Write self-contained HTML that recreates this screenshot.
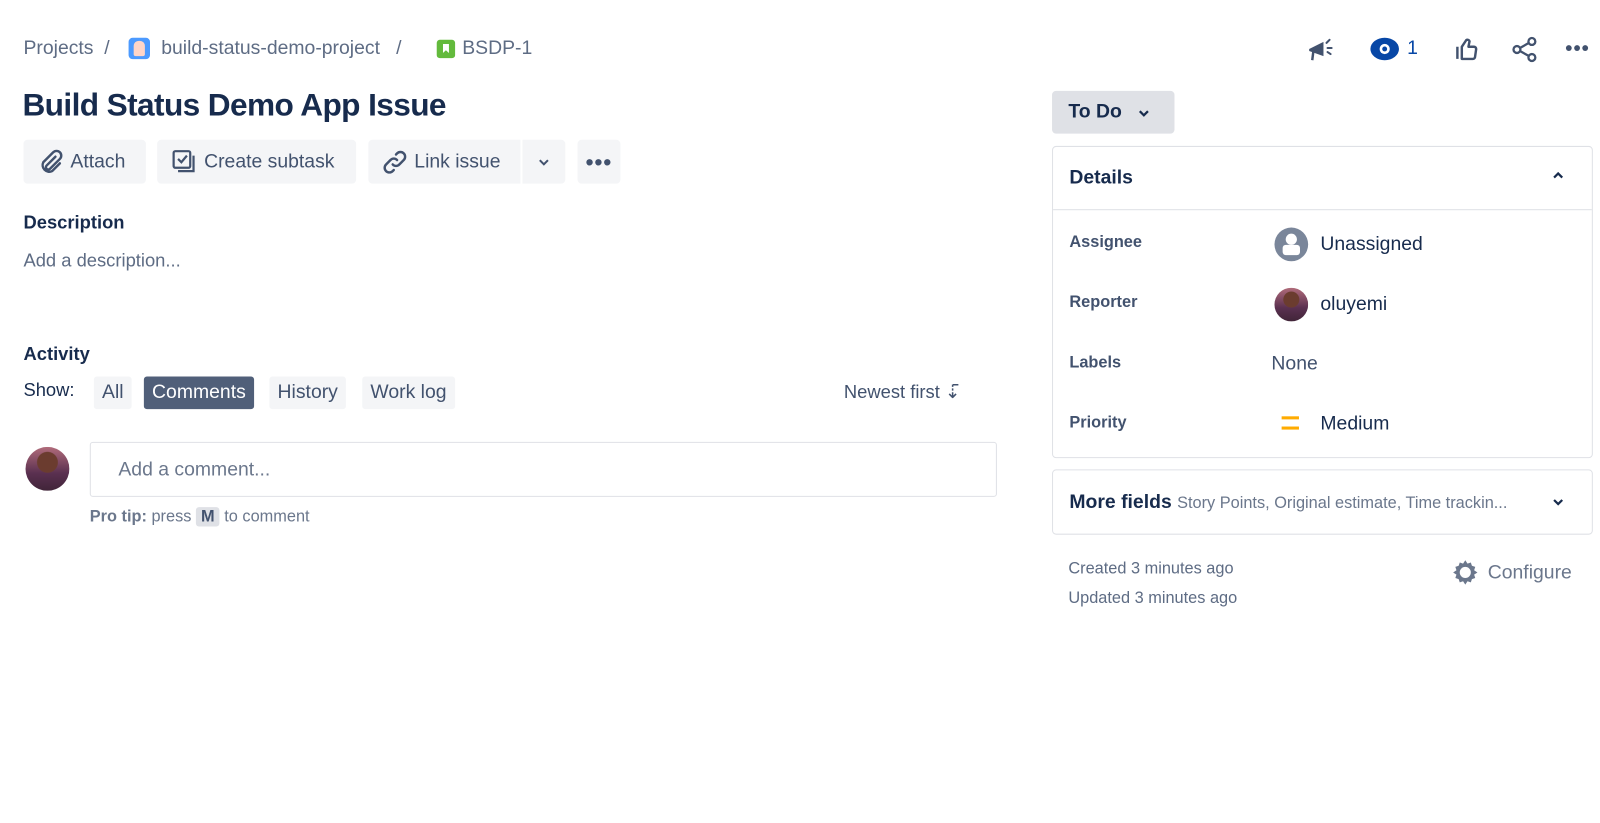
<!DOCTYPE html>
<html><head><meta charset="utf-8"><style>
*{box-sizing:border-box;margin:0;padding:0}
body{width:1600px;height:823px;background:#fff;font-family:"Liberation Sans",Arial,sans-serif;color:#172b4d;position:relative;overflow:hidden}
#w{position:absolute;left:0;top:0;width:1568px;height:807px;transform:scale(1.0204);transform-origin:0 0}
.a{position:absolute;white-space:nowrap}
.btn{position:absolute;background:#f4f5f7;border-radius:4px;height:43px;display:flex;align-items:center;font-size:19px;color:#42526e}
.pill{position:absolute;top:369px;height:32px;border-radius:3px;background:#f4f5f7;color:#42526e;font-size:19px;display:flex;align-items:center;padding:0 8px}
.lbl{position:absolute;left:1048px;font-size:16px;font-weight:bold;color:#42526e}
.val{position:absolute;font-size:19px;color:#172b4d}
.av{position:absolute;border-radius:50%;background:radial-gradient(circle at 50% 35%,#6b3c2f 0 28%,transparent 30%),linear-gradient(#b06b7a,#5a3050 60%,#402438);}
</style></head><body><div id="w">
<div class="a" style="left:23px;top:37px;font-size:19px;color:#5e6c84">Projects&nbsp;&nbsp;/</div>
<div class="a" style="left:126px;top:37px;width:21px;height:21px;background:#4c9aff;border-radius:4px"><div style="margin:3px 5px;width:11px;height:15px;background:#ffd5c8;border-radius:5px 5px 2px 2px"></div></div>
<div class="a" style="left:158px;top:37px;font-size:19px;color:#5e6c84">build-status-demo-project&nbsp;&nbsp;&nbsp;/</div>
<div class="a" style="left:428px;top:39px;width:18px;height:18px;background:#63ba3c;border-radius:3px"><div style="margin:4px 6px;width:6px;height:9px;background:#fff;clip-path:polygon(0 0,100% 0,100% 100%,50% 70%,0 100%)"></div></div>
<div class="a" style="left:453px;top:37px;font-size:19px;color:#5e6c84">BSDP-1</div>
<div class="a" style="left:22px;top:85px;font-size:31px;font-weight:bold;letter-spacing:-0.6px">Build Status Demo App Issue</div>

<div class="btn" style="left:23px;top:137px;width:120px;padding-left:14px"><svg width="26" height="26" viewBox="0 0 24 24" fill="none" stroke="#42526e" stroke-width="2.2" stroke-linecap="round"><path d="M16 7l-8 8a2 2 0 0 0 3 3l9-9a4 4 0 0 0-6-6l-9 9a6 6 0 0 0 8 8l7-7"/></svg><span style="margin-left:6px">Attach</span></div>
<div class="btn" style="left:154px;top:137px;width:195px;padding-left:14px"><svg width="26" height="26" viewBox="0 0 24 24" fill="none" stroke="#42526e" stroke-width="2"><rect x="2" y="2" width="15" height="15" rx="1.5"/><path d="M6 9l3 3 5-6"/><path d="M20 6v14H6"/></svg><span style="margin-left:6px">Create subtask</span></div>
<div class="btn" style="left:361px;top:137px;width:149px;padding-left:13px;border-radius:4px 0 0 4px"><svg width="26" height="26" viewBox="0 0 24 24" fill="none" stroke="#42526e" stroke-width="2.2" stroke-linecap="round"><path d="M10 14a4 4 0 0 0 6 0l4-4a4 4 0 0 0-6-6l-1 1"/><path d="M14 10a4 4 0 0 0-6 0l-4 4a4 4 0 0 0 6 6l1-1"/></svg><span style="margin-left:6px">Link issue</span></div>
<div class="btn" style="left:512px;top:137px;width:42px;justify-content:center;border-radius:0 4px 4px 0"><svg width="12" height="8" viewBox="0 0 12 8"><path d="M2 2l4 4 4-4" fill="none" stroke="#42526e" stroke-width="2"/></svg></div>
<div class="btn" style="left:566px;top:137px;width:42px;justify-content:center;font-size:22px;font-weight:bold;letter-spacing:1px">•••</div>

<div class="a" style="left:23px;top:208px;font-size:18px;font-weight:bold">Description</div>
<div class="a" style="left:23px;top:245px;font-size:18px;color:#5e6c84">Add a description...</div>
<div class="a" style="left:23px;top:337px;font-size:18px;font-weight:bold">Activity</div>
<div class="a" style="left:23px;top:372px;font-size:18px">Show:</div>
<div class="pill" style="left:92px">All</div>
<div class="pill" style="left:141px;background:#505f79;color:#fff">Comments</div>
<div class="pill" style="left:264px">History</div>
<div class="pill" style="left:355px">Work log</div>
<div class="a" style="left:827px;top:374px;font-size:18px;color:#42526e">Newest first ⇣̄</div>
<div class="av" style="left:25px;top:438px;width:43px;height:43px"></div>
<div class="a" style="left:88px;top:433px;width:889px;height:54px;border:1px solid #dfe1e6;border-radius:3px;padding:16px 27px;font-size:19px;color:#6b778c">Add a comment...</div>
<div class="a" style="left:88px;top:498px;font-size:16px;color:#6b778c"><b>Pro tip:</b> press <span style="background:#dfe1e6;border-radius:3px;padding:1px 5px;font-weight:bold;color:#42526e">M</span> to comment</div>

<svg class="a" style="left:1280px;top:35px" width="30" height="28" viewBox="0 0 30 28"><path d="M3 13l14-7v14L3 15z" fill="#42526e"/><path d="M7 16l-1 8" stroke="#42526e" stroke-width="2.4"/><path d="M20 7l3-3M21 12h4M21 16l3 2" stroke="#42526e" stroke-width="2" stroke-linecap="round"/></svg>
<svg class="a" style="left:1342px;top:36px" width="30" height="24" viewBox="0 0 30 24"><ellipse cx="15" cy="12" rx="14" ry="11" fill="#0747a6"/><circle cx="15" cy="12" r="5" fill="#fff"/><circle cx="15" cy="12" r="2.4" fill="#0747a6"/></svg>
<div class="a" style="left:1379px;top:37px;font-size:19px;color:#0747a6">1</div>
<svg class="a" style="left:1425px;top:35px" width="26" height="26" viewBox="0 0 24 24" fill="none" stroke="#42526e" stroke-width="2.2" stroke-linejoin="round"><path d="M3 10v11"/><path d="M7 21h10a2 2 0 0 0 2-2l1-7a2 2 0 0 0-2-2h-5l1-5a2 2 0 0 0-3-1L7 10z"/></svg>
<svg class="a" style="left:1481px;top:35px" width="27" height="27" viewBox="0 0 24 24" fill="none" stroke="#42526e" stroke-width="2"><circle cx="18" cy="5" r="3"/><circle cx="5" cy="12" r="3"/><circle cx="18" cy="19" r="3"/><path d="M8 10.5l7-4M8 13.5l7 4"/></svg>
<div class="a" style="left:1534px;top:37px;font-size:20px;font-weight:bold;color:#42526e;letter-spacing:1px">•••</div>

<div class="a" style="left:1031px;top:89px;width:120px;height:42px;background:#dfe1e6;border-radius:4px;font-size:19px;font-weight:bold;padding:10px 16px;color:#172b4d">To Do <svg width="12" height="8" viewBox="0 0 12 8" style="margin-left:10px"><path d="M2 2l4 4 4-4" fill="none" stroke="#172b4d" stroke-width="2.2"/></svg></div>

<div class="a" style="left:1031px;top:143px;width:530px;height:306px;border:1px solid #dfe1e6;border-radius:4px"></div>
<div class="a" style="left:1032px;top:205px;width:528px;height:1px;background:#dfe1e6"></div>
<div class="a" style="left:1048px;top:164px;font-size:19px;font-weight:bold">Details</div>
<svg class="a" style="left:1521px;top:168px" width="12" height="8" viewBox="0 0 12 8"><path d="M2 6l4-4 4 4" fill="none" stroke="#172b4d" stroke-width="2.2"/></svg>
<div class="lbl" style="top:229px">Assignee</div>
<div class="lbl" style="top:288px">Reporter</div>
<div class="lbl" style="top:347px">Labels</div>
<div class="lbl" style="top:406px">Priority</div>
<div class="a" style="left:1249px;top:223px;width:33px;height:33px;border-radius:50%;background:#7a869a;overflow:hidden"><div style="position:absolute;left:11px;top:6px;width:11px;height:11px;border-radius:50%;background:#fff"></div><div style="position:absolute;left:8px;top:17px;width:17px;height:10px;border-radius:3px;background:#fff"></div></div>
<div class="val" style="left:1294px;top:229px">Unassigned</div>
<div class="av" style="left:1249px;top:282px;width:33px;height:33px"></div>
<div class="val" style="left:1294px;top:288px">oluyemi</div>
<div class="val" style="left:1246px;top:346px;color:#42526e">None</div>
<div class="a" style="left:1256px;top:408px;width:17px;height:3px;background:#ffab00"></div>
<div class="a" style="left:1256px;top:418px;width:17px;height:3px;background:#ffab00"></div>
<div class="val" style="left:1294px;top:405px">Medium</div>

<div class="a" style="left:1031px;top:460px;width:530px;height:64px;border:1px solid #dfe1e6;border-radius:4px"></div>
<div class="a" style="left:1048px;top:482px;font-size:19px;font-weight:bold">More fields <span style="font-size:16px;font-weight:normal;color:#6b778c">Story Points, Original estimate, Time trackin...</span></div>
<svg class="a" style="left:1521px;top:488px" width="12" height="8" viewBox="0 0 12 8"><path d="M2 2l4 4 4-4" fill="none" stroke="#172b4d" stroke-width="2.2"/></svg>

<div class="a" style="left:1047px;top:549px;font-size:16px;color:#5e6c84">Created 3 minutes ago</div>
<div class="a" style="left:1047px;top:578px;font-size:16px;color:#5e6c84">Updated 3 minutes ago</div>
<svg class="a" style="left:1423px;top:548px" width="26" height="26" viewBox="0 0 24 24"><path d="M12 1l2 3 3-1 1 3 3 1-1 3 3 2-3 2 1 3-3 1-1 3-3-1-2 3-2-3-3 1-1-3-3-1 1-3-3-2 3-2-1-3 3-1 1-3 3 1z" fill="#6b778c"/><circle cx="12" cy="12" r="5" fill="#fff"/></svg>
<div class="a" style="left:1458px;top:551px;font-size:19px;color:#6b778c">Configure</div>
</div></body></html>
